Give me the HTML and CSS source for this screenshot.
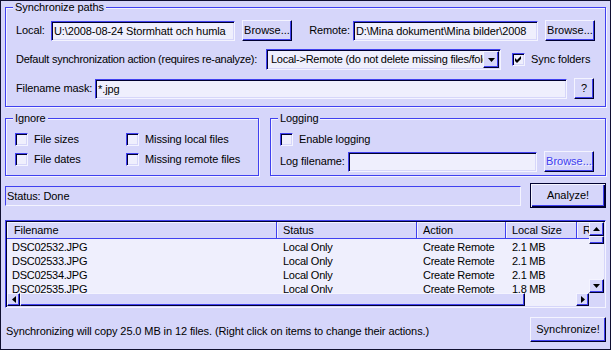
FILE: index.html
```html
<!DOCTYPE html>
<html lang="en">

<head>
  <meta charset="UTF-8">
  <title>Synchronize</title>
  <link rel="stylesheet" href="styles.css">
</head>

<body>
  <div class="window">
    <!-- Paths -->
    <fieldset class="group paths">
      <legend>Synchronize paths</legend>
      <div class="row">
        <span class="lbl local-lbl">Local:</span>
        <div class="edit path-local">U:\2008-08-24 Stormhatt och humla</div>
        <button class="btn browse">Browse...</button>
        <span class="lbl remote-lbl">Remote:</span>
        <div class="edit path-remote">D:\Mina dokument\Mina bilder\2008</div>
        <button class="btn browse">Browse...</button>
      </div>
      <div class="row">
        <span class="lbl action-lbl">Default synchronization action (requires re-analyze):</span>
        <div class="combo">
          <span class="combo-text">Local-&gt;Remote (do not delete missing files/folders)</span>
          <span class="combo-btn">
            <svg width="7" height="4" viewBox="0 0 7 4"><polygon points="0,0 7,0 3.5,4" fill="#000" /></svg>
          </span>
        </div>
        <div class="check sync">
          <span class="box">
            <svg width="9" height="9" viewBox="0 0 9 9"><path d="M1 3 L3 5 L7 1 L7 4 L3 8 L1 6 Z" fill="#000" /></svg>
          </span>
          Sync folders
        </div>
      </div>
      <div class="row">
        <span class="lbl mask-lbl">Filename mask:</span>
        <div class="edit mask">*.jpg</div>
        <button class="btn help">?</button>
      </div>
    </fieldset>

    <div class="options">
      <fieldset class="group ignore">
        <legend>Ignore</legend>
        <div class="ignore-grid">
          <div class="check"><span class="box"></span>File sizes</div>
          <div class="check"><span class="box"></span>Missing local files</div>
          <div class="check"><span class="box"></span>File dates</div>
          <div class="check"><span class="box"></span>Missing remote files</div>
        </div>
      </fieldset>
      <fieldset class="group logging">
        <legend>Logging</legend>
        <div class="check"><span class="box"></span>Enable logging</div>
        <div class="row log-row">
          <span class="lbl log-lbl">Log filename:</span>
          <div class="edit log-file"></div>
          <button class="btn browse disabled">Browse...</button>
        </div>
      </fieldset>
    </div>

    <div class="status-row">
      <div class="status">Status: Done</div>
      <button class="btn big default">Analyze!</button>
    </div>

    <!-- File list -->
    <div class="list">
      <div class="lv">
        <div class="cols lv-head">
          <span>Filename</span>
          <span>Status</span>
          <span>Action</span>
          <span>Local Size</span>
          <span>Remote Size</span>
        </div>
        <div class="lv-body">
          <div class="cols lv-row"><span>DSC02532.JPG</span><span>Local Only</span><span>Create Remote</span><span>2.1 MB</span><span></span></div>
          <div class="cols lv-row"><span>DSC02533.JPG</span><span>Local Only</span><span>Create Remote</span><span>2.1 MB</span><span></span></div>
          <div class="cols lv-row"><span>DSC02534.JPG</span><span>Local Only</span><span>Create Remote</span><span>2.1 MB</span><span></span></div>
          <div class="cols lv-row"><span>DSC02535.JPG</span><span>Local Only</span><span>Create Remote</span><span>1.8 MB</span><span></span></div>
        </div>
      </div>
      <div class="vsb">
        <span class="sb-btn v"><svg width="7" height="4" viewBox="0 0 7 4"><polygon points="3.5,0 7,4 0,4" fill="#000" /></svg></span>
        <span class="sb-thumb v"></span>
        <span class="sb-track"></span>
        <span class="sb-btn v"><svg width="7" height="4" viewBox="0 0 7 4"><polygon points="0,0 7,0 3.5,4" fill="#000" /></svg></span>
      </div>
      <div class="hsb">
        <span class="sb-btn h"><svg width="4" height="7" viewBox="0 0 4 7"><polygon points="4,0 4,7 0,3.5" fill="#000" /></svg></span>
        <span class="sb-thumb h"></span>
        <span class="sb-track"></span>
        <span class="sb-btn h"><svg width="4" height="7" viewBox="0 0 4 7"><polygon points="0,0 4,3.5 0,7" fill="#000" /></svg></span>
      </div>
      <div class="corner"></div>
    </div>

    <div class="bottom-row">
      <span class="summary">Synchronizing will copy 25.0 MB in 12 files. (Right click on items to change their actions.)</span>
      <button class="btn big">Synchronize!</button>
    </div>
  </div>
</body>

</html>
```

FILE: styles.css
```css
/* Classic 3D look, lavender scheme */
* {
  box-sizing: border-box;
}

body {
  margin: 0;
  font: 11px/13px "Liberation Sans", Arial, sans-serif;
  letter-spacing: -0.1px;
  color: #000;
  background: #d6d6fa;
}

.window {
  width: 611px;
  height: 350px;
  border: 1px solid #101030;
  background: #d6d6fa;
  padding: 0 4px;
  display: flex;
  flex-direction: column;
}

/* Group boxes */
.group {
  margin: 0;
  min-width: 0;
  border: 1px solid #4040f0;
  box-shadow: inset 1px 1px #f4f4ff, 1px 1px #f4f4ff;
  padding: 6px 10px 7px 10px;
}

.group legend {
  padding: 0 2px;
  margin-left: -3px;
  line-height: 13px;
  background: #d6d6fa;
}

.row {
  display: flex;
  align-items: center;
  height: 21px;
}

.row + .row {
  margin-top: 8px;
}

.lbl {
  white-space: nowrap;
  flex: none;
}

.local-lbl {
  width: 35px;
}

.remote-lbl {
  flex: 1;
  text-align: right;
  padding-right: 3px;
}

.action-lbl {
  width: 250px;
  letter-spacing: -0.25px;
}

.mask-lbl {
  width: 79px;
}

/* Sunken edit field */
.edit {
  height: 20px;
  border: 1px solid;
  border-color: #4040f0 #f4f4ff #f4f4ff #4040f0;
  box-shadow: inset 1px 1px #000030, inset -1px -1px #d6d6fa;
  background: #efeffd;
  padding: 0 2px;
  line-height: 18px;
  white-space: nowrap;
  overflow: hidden;
  flex: none;
}

.path-local {
  width: 184px;
}

.path-remote {
  width: 185px;
}

.mask {
  width: 472px;
}

/* Raised button */
.btn {
  font: inherit;
  color: #000;
  height: 21px;
  padding: 0;
  background: #d6d6fa;
  border: 1px solid;
  border-color: #f4f4ff #000030 #000030 #f4f4ff;
  box-shadow: inset -1px -1px #4040f0;
  flex: none;
}

.browse {
  width: 50px;
  margin-left: 7px;
}

.help {
  width: 20px;
  margin-left: 7px;
}

.btn.disabled {
  color: #4040f0;
  text-shadow: 1px 1px #f4f4ff;
}

.btn.big {
  width: 76px;
  height: 25px;
}

.btn.default {
  border-color: #000030;
  box-shadow: inset 1px 1px #f4f4ff, inset -1px -1px #000030, inset -2px -2px #4040f0;
}

/* Combo box */
.combo {
  width: 235px;
  height: 21px;
  display: flex;
  border: 1px solid;
  border-color: #4040f0 #f4f4ff #f4f4ff #4040f0;
  box-shadow: inset 1px 1px #000030, inset -1px -1px #d6d6fa;
  background: #efeffd;
  padding: 1px;
  flex: none;
}

.combo-text {
  flex: 1;
  min-width: 0;
  white-space: nowrap;
  overflow: hidden;
  padding-left: 3px;
  line-height: 17px;
  letter-spacing: -0.25px;
}

.combo-btn {
  width: 16px;
  display: flex;
  align-items: center;
  justify-content: center;
  background: #d6d6fa;
  border: 1px solid;
  border-color: #f4f4ff #000030 #000030 #f4f4ff;
  box-shadow: inset -1px -1px #4040f0;
}

/* Check boxes */
.check {
  display: flex;
  align-items: center;
  white-space: nowrap;
  height: 13px;
}

.box {
  width: 13px;
  height: 13px;
  margin-right: 6px;
  border: 1px solid;
  border-color: #4040f0 #f4f4ff #f4f4ff #4040f0;
  box-shadow: inset 1px 1px #000030, inset -1px -1px #d6d6fa;
  background: #efeffd;
  display: flex;
  align-items: center;
  justify-content: center;
  flex: none;
}

.sync {
  margin-left: 11px;
}

/* Ignore / Logging */
.options {
  display: flex;
  gap: 11px;
  margin-top: 5px;
}

.options .group {
  padding: 8px 9px 3px 9px;
}

.options .group legend {
  margin-left: -2px;
}

.ignore {
  width: 254px;
}

.logging {
  flex: 1;
}

.ignore-grid {
  display: grid;
  grid-template-columns: 111px 1fr;
  row-gap: 7px;
}

.log-row {
  margin-top: 5px;
}

.log-lbl {
  width: 68px;
}

.log-file {
  width: 189px;
}

/* Status line */
.status-row {
  display: flex;
  align-items: center;
  justify-content: space-between;
  margin-top: 7px;
}

.status {
  width: 516px;
  height: 20px;
  border: 1px solid;
  border-color: #4040f0 #f4f4ff #f4f4ff #4040f0;
  padding-left: 1px;
  line-height: 18px;
}

/* List view */
.list {
  margin-top: 12px;
  height: 88px;
  padding: 1px;
  border: 1px solid;
  border-color: #4040f0 #f4f4ff #f4f4ff #4040f0;
  box-shadow: inset 1px 1px #000030, inset -1px -1px #d6d6fa;
  background: #efeffd;
  display: grid;
  grid-template-columns: 1fr 15px;
  grid-template-rows: 1fr 13px;
}

.lv {
  overflow: hidden;
  min-width: 0;
}

.cols {
  display: grid;
  grid-template-columns: 270px 140px 89px 71px 80px;
  white-space: nowrap;
}

.lv-head {
  height: 17px;
}

.lv-head span {
  background: #d6d6fa;
  border-right: 1px solid #4040f0;
  border-bottom: 1px solid #4040f0;
  box-shadow: inset 1px 1px #f4f4ff;
  padding-left: 6px;
  line-height: 16px;
  overflow: hidden;
}

.lv-head span:first-child {
  padding-left: 7px;
}

.lv-body {
  padding-top: 1px;
}

.lv-row {
  height: 14px;
  line-height: 14px;
  letter-spacing: -0.25px;
}

.lv-row span {
  padding-left: 6px;
  overflow: hidden;
}

.lv-row span:first-child {
  padding-left: 5px;
}

/* Scroll bars */
.vsb,
.hsb {
  display: flex;
  background: #efeffd;
}

.vsb {
  flex-direction: column;
}

.sb-btn,
.sb-thumb {
  display: flex;
  align-items: center;
  justify-content: center;
  background: #d6d6fa;
  border: 1px solid;
  border-color: #f4f4ff #000030 #000030 #f4f4ff;
  box-shadow: inset -1px -1px #4040f0;
  flex: none;
}

.sb-btn.v {
  height: 14px;
}

.sb-thumb.v {
  height: 8px;
}

.sb-btn.h {
  width: 13px;
}

.sb-thumb.h {
  width: 505px;
}

.sb-track {
  flex: 1;
}

.corner {
  background: #d6d6fa;
}

/* Bottom line */
.bottom-row {
  display: flex;
  align-items: center;
  justify-content: space-between;
  margin-top: 9px;
}

.summary {
  padding-left: 1px;
  padding-top: 4px;
  white-space: nowrap;
}
```
